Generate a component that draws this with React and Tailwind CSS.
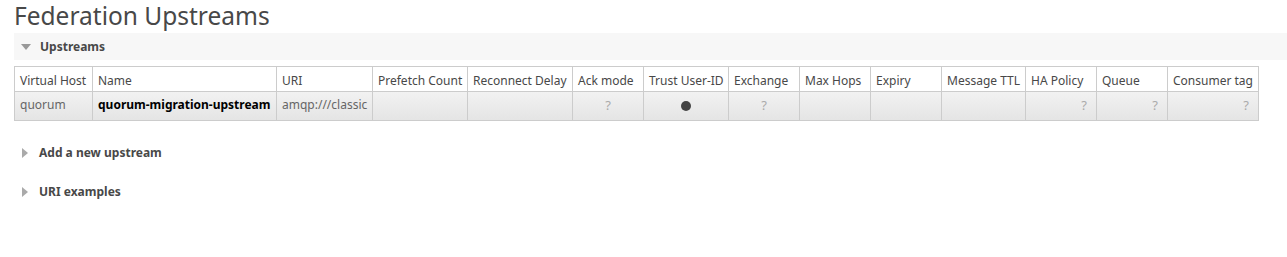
import React from 'react'

const cols = [
  { label: 'Virtual Host', w: 'w-[78px]' },
  { label: 'Name', w: 'w-[184px]' },
  { label: 'URI', w: 'w-[96px]' },
  { label: 'Prefetch Count', w: 'w-[95px]' },
  { label: 'Reconnect Delay', w: 'w-[105px]' },
  { label: 'Ack mode', w: 'w-[71px]' },
  { label: 'Trust User-ID', w: 'w-[85px]' },
  { label: 'Exchange', w: 'w-[71px]' },
  { label: 'Max Hops', w: 'w-[71px]' },
  { label: 'Expiry', w: 'w-[71px]' },
  { label: 'Message TTL', w: 'w-[84px]' },
  { label: 'HA Policy', w: 'w-[71px]' },
  { label: 'Queue', w: 'w-[71px]' },
  { label: 'Consumer tag', w: 'w-[91px]' },
]

function Tri({ open }) {
  return open ? (
    <svg width="10" height="6" viewBox="0 0 10 6" className="mr-[9px]">
      <path d="M0 0h10L5 6z" fill="#999" />
    </svg>
  ) : (
    <svg width="6" height="10" viewBox="0 0 6 10" className="mr-[11px]">
      <path d="M0 0v10l6-5z" fill="#aaa" />
    </svg>
  )
}

const Q = ({ align }) => (
  <span className={`block text-[13px] text-[#aaa] ${align}`}>?</span>
)

export default function App() {
  const cell = 'border border-[#ccc] px-[5px] text-left overflow-hidden'
  return (
    <div className="w-[1287px] h-[257px] bg-white text-[12px] text-[#484848]" style={{ fontFamily: '"Noto Sans", "Open Sans", sans-serif' }}>
      <h1 className="text-[24.5px] font-normal leading-[34px] pl-[14px] text-[#484848] -mt-[1px]">Federation Upstreams</h1>
      <div className="ml-[14px] h-[27px] bg-[#f7f7f7] flex items-center pl-[7px] font-bold text-[12px] text-[#484848]">
        <Tri open />
        Upstreams
      </div>
      <table className="ml-[14px] mt-[6px] border-collapse table-fixed w-[1244px]">
        <colgroup>
          {cols.map((c) => (
            <col key={c.label} className={c.w} />
          ))}
        </colgroup>
        <thead>
          <tr className="h-[25px]">
            {cols.map((c) => (
              <th key={c.label} className={`${cell} font-normal whitespace-nowrap pt-[3px] pb-0`}>{c.label}</th>
            ))}
          </tr>
        </thead>
        <tbody>
          <tr className="h-[29px] bg-gradient-to-b from-[#f2f2f2] to-[#e4e4e4]">
            <td className={`${cell} text-[#666] pb-[3px]`}>quorum</td>
            <td className={`${cell} font-bold text-black whitespace-nowrap pb-[3px]`}>quorum-migration-upstream</td>
            <td className={`${cell} text-[#666] whitespace-nowrap pb-[3px]`}>amqp:///classic</td>
            <td className={cell}></td>
            <td className={cell}></td>
            <td className={cell}><Q align="text-center" /></td>
            <td className={cell}>
              <span className="block mx-auto w-[10px] h-[10px] rounded-full bg-[#444]" />
            </td>
            <td className={cell}><Q align="text-center" /></td>
            <td className={cell}></td>
            <td className={cell}></td>
            <td className={cell}></td>
            <td className={`${cell} pr-[9px]`}><Q align="text-right" /></td>
            <td className={`${cell} pr-[9px]`}><Q align="text-right" /></td>
            <td className={`${cell} pr-[9px]`}><Q align="text-right" /></td>
          </tr>
        </tbody>
      </table>
      <div className="ml-[22px] mt-[23px] flex items-center font-bold text-[12px] text-[#484848] h-[18px]">
        <Tri />
        Add a new upstream
      </div>
      <div className="ml-[22px] mt-[21px] flex items-center font-bold text-[12px] text-[#484848] h-[18px]">
        <Tri />
        URI examples
      </div>
    </div>
  )
}
